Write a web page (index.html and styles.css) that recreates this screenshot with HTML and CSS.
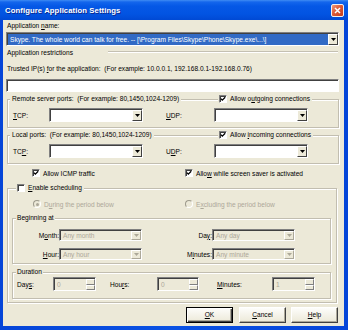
FILE: index.html
```html
<!DOCTYPE html>
<html>
<head>
<meta charset="utf-8">
<link rel="stylesheet" href="styles.css">
</head>
<body>
<div class="window">
  <div class="titlebar">
    <span class="title">Configure Application Settings</span>
    <span class="close"><svg width="7" height="7" viewBox="0 0 7 7"><path d="M1 1L6 6M6 1L1 6" stroke="#fff" stroke-width="1.5"/></svg></span>
  </div>
  <div class="client">
    <div class="lbl l-name">Application <u>n</u>ame:</div>
    <div class="combo c-app">
      <span class="val sel">Skype. The whole world can talk for free. -- [\Program Files\Skype\Phone\Skype.exe\...\]</span>
      <span class="dd"><svg width="5" height="3" viewBox="0 0 5 3"><path d="M0 0H5L2.5 3Z" fill="#000"/></svg></span>
    </div>
    <div class="sep"><span>Application restrictions</span><span class="sep-line"></span></div>
    <div class="lbl l-ip">Trusted IP(s) <u>f</u>or the application:&nbsp; (For example: 10.0.0.1, 192.168.0.1-192.168.0.76)</div>
    <div class="textbox"></div>

    <div class="group g-ports g-remote">
      <div class="ghead">
        <span class="gtitle">Remote server ports:&nbsp; (For example: 80,1450,1024-1209)</span>
        <span class="gtitle chk"><span class="box"><svg width="6" height="6" viewBox="0 0 6 6"><path d="M0.8 2.6L2.3 4.1L5.2 1.2" stroke="#000" stroke-width="1.3" fill="none"/></svg></span><span>Allow o<u>u</u>tgoing connections</span></span>
      </div>
      <div class="prow">
        <span class="plbl"><u>T</u>CP:</span>
        <span class="combo c-port"><span class="val"></span><span class="dd"><svg width="5" height="3" viewBox="0 0 5 3"><path d="M0 0H5L2.5 3Z" fill="#000"/></svg></span></span>
        <span class="plbl udp"><u>U</u>DP:</span>
        <span class="combo c-port"><span class="val"></span><span class="dd"><svg width="5" height="3" viewBox="0 0 5 3"><path d="M0 0H5L2.5 3Z" fill="#000"/></svg></span></span>
      </div>
    </div>

    <div class="group g-ports g-local">
      <div class="ghead">
        <span class="gtitle">Local ports:&nbsp; (For example: 80,1450,1024-1209)</span>
        <span class="gtitle chk"><span class="box"><svg width="6" height="6" viewBox="0 0 6 6"><path d="M0.8 2.6L2.3 4.1L5.2 1.2" stroke="#000" stroke-width="1.3" fill="none"/></svg></span><span>Allow <u>i</u>ncoming connections</span></span>
      </div>
      <div class="prow">
        <span class="plbl">TC<u>P</u>:</span>
        <span class="combo c-port"><span class="val"></span><span class="dd"><svg width="5" height="3" viewBox="0 0 5 3"><path d="M0 0H5L2.5 3Z" fill="#000"/></svg></span></span>
        <span class="plbl udp">U<u>D</u>P:</span>
        <span class="combo c-port"><span class="val"></span><span class="dd"><svg width="5" height="3" viewBox="0 0 5 3"><path d="M0 0H5L2.5 3Z" fill="#000"/></svg></span></span>
      </div>
    </div>

    <div class="crow">
      <span class="chk"><span class="box"><svg width="6" height="6" viewBox="0 0 6 6"><path d="M0.8 2.6L2.3 4.1L5.2 1.2" stroke="#000" stroke-width="1.3" fill="none"/></svg></span><span>Allow ICMP traffic</span></span>
      <span class="chk"><span class="box"><svg width="6" height="6" viewBox="0 0 6 6"><path d="M0.8 2.6L2.3 4.1L5.2 1.2" stroke="#000" stroke-width="1.3" fill="none"/></svg></span><span>Allo<u>w</u> while screen saver is activated</span></span>
    </div>

    <div class="group g-sched">
      <div class="ghead">
        <span class="gtitle chk"><span class="box"></span><span><u>E</u>nable scheduling</span></span>
      </div>
      <div class="rrow">
        <span class="radio-item"><span class="radio on"></span><span>D<u>u</u>ring the period below</span></span>
        <span class="radio-item"><span class="radio"></span><span>E<u>x</u>cluding the period below</span></span>
      </div>

      <div class="group g-inner g-begin">
        <div class="ghead">
          <span class="gtitle">Beginning at</span>
        </div>
        <div class="brow">
          <span class="blbl">M<u>o</u>nth:</span>
          <span class="combo c-dis"><span class="val">Any month</span><span class="dd"><svg width="5" height="3" viewBox="0 0 5 3"><path d="M0 0H5L2.5 3Z" fill="#aca899"/></svg></span></span>
          <span class="blbl">Da<u>y</u>:</span>
          <span class="combo c-dis"><span class="val">Any day</span><span class="dd"><svg width="5" height="3" viewBox="0 0 5 3"><path d="M0 0H5L2.5 3Z" fill="#aca899"/></svg></span></span>
        </div>
        <div class="brow brow2">
          <span class="blbl"><u>H</u>our:</span>
          <span class="combo c-dis"><span class="val">Any hour</span><span class="dd"><svg width="5" height="3" viewBox="0 0 5 3"><path d="M0 0H5L2.5 3Z" fill="#aca899"/></svg></span></span>
          <span class="blbl">M<u>i</u>nutes:</span>
          <span class="combo c-dis"><span class="val">Any minute</span><span class="dd"><svg width="5" height="3" viewBox="0 0 5 3"><path d="M0 0H5L2.5 3Z" fill="#aca899"/></svg></span></span>
        </div>
      </div>

      <div class="group g-inner g-dur">
        <div class="ghead">
          <span class="gtitle">Duration</span>
        </div>
        <div class="drow">
          <span class="dlbl">Day<u>s</u>:</span>
          <span class="spin"><span class="val">0</span><span class="spbtns"><span class="spb"></span><span class="spb"></span></span></span>
          <span class="dlbl d2">Hou<u>r</u>s:</span>
          <span class="spin"><span class="val">0</span><span class="spbtns"><span class="spb"></span><span class="spb"></span></span></span>
          <span class="dlbl d3"><u>M</u>inutes:</span>
          <span class="spin"><span class="val">1</span><span class="spbtns"><span class="spb"></span><span class="spb"></span></span></span>
        </div>
      </div>
    </div>

    <div class="buttons">
      <span class="btn default"><u>O</u>K</span>
      <span class="btn"><u>C</u>ancel</span>
      <span class="btn"><u>H</u>elp</span>
    </div>
  </div>
</div>
</body>
</html>
```
FILE: styles.css
```css
* { box-sizing: border-box; }
html, body { margin: 0; padding: 0; }
body {
  width: 348px;
  height: 330px;
  overflow: hidden;
  font-family: "Liberation Sans", Arial, sans-serif;
  font-size: 6.6px;
  color: #000;
  background: #0A4FE0;
}
u { text-decoration: underline; text-underline-offset: 1px; }

.window {
  width: 348px;
  height: 330px;
  display: flex;
  flex-direction: column;
  background: linear-gradient(90deg, #0545d8, #0a52e4 50%, #0545d8);
}
.titlebar {
  height: 20px;
  flex: none;
  display: flex;
  align-items: center;
  padding: 0 4px 0 5px;
  background: linear-gradient(#3f8cf3 0, #1466ec 2px, #0558e6 6px, #0254e2 14px, #0049d4 20px);
}
.title {
  flex: 1;
  color: #fff;
  font-weight: bold;
  font-size: 7.7px;
  letter-spacing: 0.1px;
  text-shadow: 1px 1px #0c2a90;
}
.close {
  width: 13px;
  height: 13px;
  border: 1px solid #f4f0ee;
  border-radius: 2px;
  background: linear-gradient(135deg, #f09a7c, #dd5a36 45%, #c43d1d);
  display: flex;
  align-items: center;
  justify-content: center;
}

.client {
  flex: 1;
  margin: 0 4px 4px 3px;
  background: #ECE9D8;
  padding: 0 5px 0 3px;
  display: flex;
  flex-direction: column;
}
.client > * { flex: none; }

.lbl { height: 10px; line-height: 10px; padding-left: 1px; white-space: nowrap; }
.l-name { margin-top: 1px; }
.l-ip { margin-top: 7px; }

/* combo boxes */
.combo {
  display: flex;
  height: 14px;
  background: #fff;
  border: 1px solid;
  border-color: #808080 #fff #fff #808080;
  box-shadow: inset 1px 1px #404040;
  padding: 1px 0 0 1px;
}
.combo .val {
  flex: 1;
  min-width: 0;
  line-height: 11px;
  padding-left: 2px;
  white-space: nowrap;
  overflow: hidden;
}
.combo .val.sel { background: #316AC5; color: #fff; }
.dd {
  width: 10px;
  flex: none;
  background: #ECE9D8;
  border: 1px solid;
  border-color: #fff #404040 #404040 #fff;
  display: flex;
  align-items: center;
  justify-content: center;
}
.c-app { margin-top: 1px; }

.sep { margin-top: 1px; height: 10px; display: flex; align-items: center; padding-left: 1px; }
.sep-line { margin-left: auto; width: 230px; margin-right: 1px; border-top: 1px solid #c4c0b2; border-bottom: 1px solid #fff; }

.textbox {
  margin-top: 5px;
  height: 13px;
  background: #fff;
  border: 1px solid;
  border-color: #808080 #fff #fff #808080;
  box-shadow: inset 1px 1px #404040;
}

/* group boxes */
.group {
  border: 1px solid #c2beb0;
  box-shadow: 1px 1px 0 #fff, inset 1px 1px 0 #fff;
}
.ghead {
  height: 10px;
  margin-top: -6px;
  display: grid;
  align-items: center;
  justify-items: start;
}
.gtitle { background: #ECE9D8; padding: 0 2px; white-space: nowrap; line-height: 10px; }

.g-ports { margin-left: 1px; padding: 0 0 5px 5px; }
.g-ports .ghead { grid-template-columns: 205px auto; }
.g-ports .ghead .gtitle:first-child { margin-left: -3px; }
.g-ports .ghead .chk { padding-left: 1px; }
.g-remote { margin-top: 7px; }
.g-local { margin-top: 7px; }

.prow { display: flex; margin-top: 4px; height: 14px; align-items: center; }
.plbl { width: 36px; white-space: nowrap; }
.plbl.udp { width: 48px; margin-left: 23px; }
.c-port { width: 94px; }

/* checkboxes */
.chk { display: flex; align-items: center; white-space: nowrap; }
.box {
  width: 8px;
  height: 8px;
  flex: none;
  margin-right: 3px;
  background: #fff;
  border: 1px solid;
  border-color: #808080 #fff #fff #808080;
  box-shadow: inset 1px 1px #404040;
  display: flex;
  align-items: center;
  justify-content: center;
}
.crow {
  margin-top: 4px;
  height: 10px;
  display: grid;
  grid-template-columns: 153px auto;
  align-items: center;
  padding-left: 26px;
}

.g-sched { margin: 10px 2px 0 1px; padding: 0 5px 3px 4px; }
.g-sched > .ghead .gtitle { margin-left: 4px; padding-left: 1px; }

.rrow {
  margin-top: 6px;
  height: 10px;
  display: grid;
  grid-template-columns: 152px auto;
  align-items: center;
  padding-left: 21px;
  color: #aca899;
}
.radio-item { display: flex; align-items: center; white-space: nowrap; }
.radio {
  width: 8px;
  height: 8px;
  flex: none;
  border-radius: 50%;
  border: 1px solid;
  border-color: #9d9a8c #fff #fff #9d9a8c;
  margin-right: 3px;
  display: flex;
  align-items: center;
  justify-content: center;
}
.radio.on::after { content: ""; width: 3px; height: 3px; border-radius: 50%; background: #aca899; }

.g-inner .ghead .gtitle { margin-left: 3px; padding: 0 1px; }
.g-begin { margin-top: 9px; padding-bottom: 3px; }
.brow {
  margin-top: 6px;
  height: 12px;
  display: grid;
  grid-template-columns: 46px 83px 70px 83px;
  align-items: center;
}
.brow2 { margin-top: 7px; }
.blbl { text-align: right; white-space: nowrap; }
.c-dis { height: 12px; background: #ECE9D8; color: #aca899; }
.c-dis .val { line-height: 9px; }
.c-dis .dd { border-color: #fff #aca899 #aca899 #fff; }

.g-dur { margin-top: 8px; padding-bottom: 7px; }
.drow {
  height: 14px;
  display: grid;
  grid-template-columns: 40px 43px 61px 42px 73px 43px;
  align-items: center;
}
.dlbl { padding-left: 4px; white-space: nowrap; }
.dlbl.d2 { padding-left: 14px; }
.dlbl.d3 { padding-left: 18px; }
.spin {
  height: 14px;
  display: flex;
  background: #ECE9D8;
  color: #aca899;
  border: 1px solid;
  border-color: #808080 #fff #fff #808080;
  box-shadow: inset 1px 1px #404040;
  padding: 1px 0 0 1px;
}
.spin .val { flex: 1; line-height: 11px; padding-left: 2px; }
.spbtns { width: 9px; display: flex; flex-direction: column; }
.spb { flex: 1; border: 1px solid; border-color: #fff #808080 #808080 #fff; background: #ECE9D8; }

.buttons {
  margin-top: 4px;
  margin-right: 1px;
  display: flex;
  justify-content: flex-end;
}
.btn {
  width: 47px;
  height: 16px;
  line-height: 14px;
  text-align: center;
  background: linear-gradient(#fdfdfb, #ece9d8);
  border: 1px solid;
  border-color: #fff #404040 #404040 #fff;
  box-shadow: inset -1px -1px #aca899;
  margin-left: 5px;
}
.btn.default {
  border: 1px solid #000;
  box-shadow: inset 1px 1px #fff, inset -1px -1px #404040, inset -2px -2px #aca899;
  margin-right: 1px;
}
```
